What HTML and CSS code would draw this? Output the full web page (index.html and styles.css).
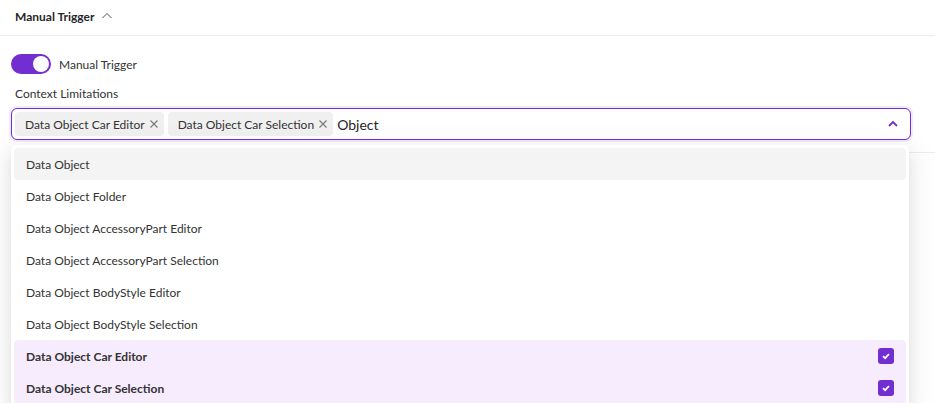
FILE: index.html
```html
<!DOCTYPE html>
<html lang="en">
<head>
    <meta charset="UTF-8">
    <meta name="viewport" content="width=device-width, initial-scale=1.0">
    <title>Manual Trigger</title>
    <link rel="stylesheet" href="styles.css">
</head>
<body>
    <div class="panel">
        <div class="panel-header">
            <span class="panel-title">Manual Trigger</span>
            <svg class="header-chevron" width="12" height="10" viewBox="0 0 12 10">
                <path d="M1.5 7 L6 2.5 L10.5 7" fill="none" stroke="#555" stroke-width="1"/>
            </svg>
        </div>

        <div class="panel-body">
            <div class="switch-row">
                <span class="switch"><span class="switch-knob"></span></span>
                <span class="switch-label">Manual Trigger</span>
            </div>

            <div class="field-label">Context Limitations</div>

            <div class="field">
                <div class="select">
                    <span class="tag">Data Object Car Editor
                        <svg class="tag-close" width="10" height="10" viewBox="0 0 10 10"><path d="M1.5 1.5 L8.5 8.5 M8.5 1.5 L1.5 8.5" stroke="#777" stroke-width="1.1"/></svg>
                    </span>
                    <span class="tag">Data Object Car Selection
                        <svg class="tag-close" width="10" height="10" viewBox="0 0 10 10"><path d="M1.5 1.5 L8.5 8.5 M8.5 1.5 L1.5 8.5" stroke="#777" stroke-width="1.1"/></svg>
                    </span>
                    <span class="search">Object</span>
                    <svg class="select-arrow" width="12" height="12" viewBox="0 0 12 12">
                        <path d="M2 8 L6 4 L10 8" fill="none" stroke="#722ed1" stroke-width="1.8"/>
                    </svg>
                </div>

                <div class="dropdown">
                    <div class="option active">Data Object</div>
                    <div class="option">Data Object Folder</div>
                    <div class="option">Data Object AccessoryPart Editor</div>
                    <div class="option">Data Object AccessoryPart Selection</div>
                    <div class="option">Data Object BodyStyle Editor</div>
                    <div class="option">Data Object BodyStyle Selection</div>
                    <div class="option selected">
                        Data Object Car Editor
                        <span class="check"><svg width="10" height="10" viewBox="0 0 10 10"><path d="M2 5.2 L4.2 7.2 L8 3" fill="none" stroke="#fff" stroke-width="1.8"/></svg></span>
                    </div>
                    <div class="option selected">
                        Data Object Car Selection
                        <span class="check"><svg width="10" height="10" viewBox="0 0 10 10"><path d="M2 5.2 L4.2 7.2 L8 3" fill="none" stroke="#fff" stroke-width="1.8"/></svg></span>
                    </div>
                </div>
            </div>

            <div class="card-below"></div>
        </div>
    </div>
</body>
</html>
```

FILE: styles.css
```css
body {
    margin: 0;
    font-family: 'Lato', 'Liberation Sans', sans-serif;
    font-size: 12px;
    color: #262626;
    background-color: #fff;
    overflow: hidden;
}

.panel-header {
    height: 36px;
    display: flex;
    align-items: center;
    gap: 7px;
    padding-left: 15px;
    border-bottom: 1px solid #ececec;
    box-sizing: border-box;
    padding-bottom: 2px;
}

.panel-title {
    font-weight: 700;
    font-size: 12px;
}

.header-chevron {
    margin-top: -2px;
}

.panel-body {
    padding: 18px 24px 0 11px;
}

.switch-row {
    display: flex;
    align-items: center;
    gap: 8px;
    height: 20px;
}

.switch {
    position: relative;
    width: 40px;
    height: 20px;
    border-radius: 10px;
    background-color: #722ed1;
}

.switch-knob {
    position: absolute;
    top: 2px;
    right: 2px;
    width: 16px;
    height: 16px;
    border-radius: 50%;
    background-color: #fff;
}

.switch-label {
    font-size: 12px;
    color: #333;
}

.field-label {
    margin-top: 13px;
    padding-left: 4px;
    height: 20px;
    line-height: 14px;
    color: #333;
}

.field {
    position: relative;
    margin-top: 1px;
}

.select {
    height: 32px;
    box-sizing: border-box;
    border: 1px solid #722ed1;
    border-radius: 6px;
    box-shadow: 0 0 0 2px rgba(114, 46, 209, 0.1);
    display: flex;
    align-items: center;
    padding: 0 3px;
    gap: 4px;
    background-color: #fff;
}

.tag {
    height: 24px;
    display: flex;
    align-items: center;
    gap: 4px;
    padding: 0 5px 0 10px;
    background-color: #f0f0f0;
    border-radius: 4px;
    font-size: 12px;
    color: #333;
}

.tag-close {
    display: block;
}

.search {
    font-size: 14px;
    color: #262626;
}

.select-arrow {
    margin-left: auto;
    margin-right: 8px;
}

.dropdown {
    position: absolute;
    top: 37px;
    left: 0;
    right: 2px;
    z-index: 2;
    background-color: #fff;
    border-radius: 6px;
    padding: 3px;
    box-shadow: 0 6px 16px rgba(0, 0, 0, 0.08), 0 3px 6px -4px rgba(0, 0, 0, 0.12), 0 9px 28px 8px rgba(0, 0, 0, 0.05);
}

.option {
    height: 32px;
    display: flex;
    align-items: center;
    justify-content: space-between;
    padding: 0 12px;
    border-radius: 4px;
    color: #333;
}

.option.active {
    background-color: #f4f4f4;
}

.option.selected {
    background-color: #f7ecfd;
    font-weight: 700;
    border-radius: 4px 4px 0 0;
}

.option.selected + .option.selected {
    border-radius: 0 0 4px 4px;
}

.check {
    width: 16px;
    height: 16px;
    border-radius: 3px;
    background-color: #722ed1;
    display: flex;
    align-items: center;
    justify-content: center;
}

.card-below {
    margin-top: 12px;
    margin-right: -24px;
    height: 250px;
    border-top: 1px solid #ececec;
    border-radius: 8px 0 0 0;
}
```
